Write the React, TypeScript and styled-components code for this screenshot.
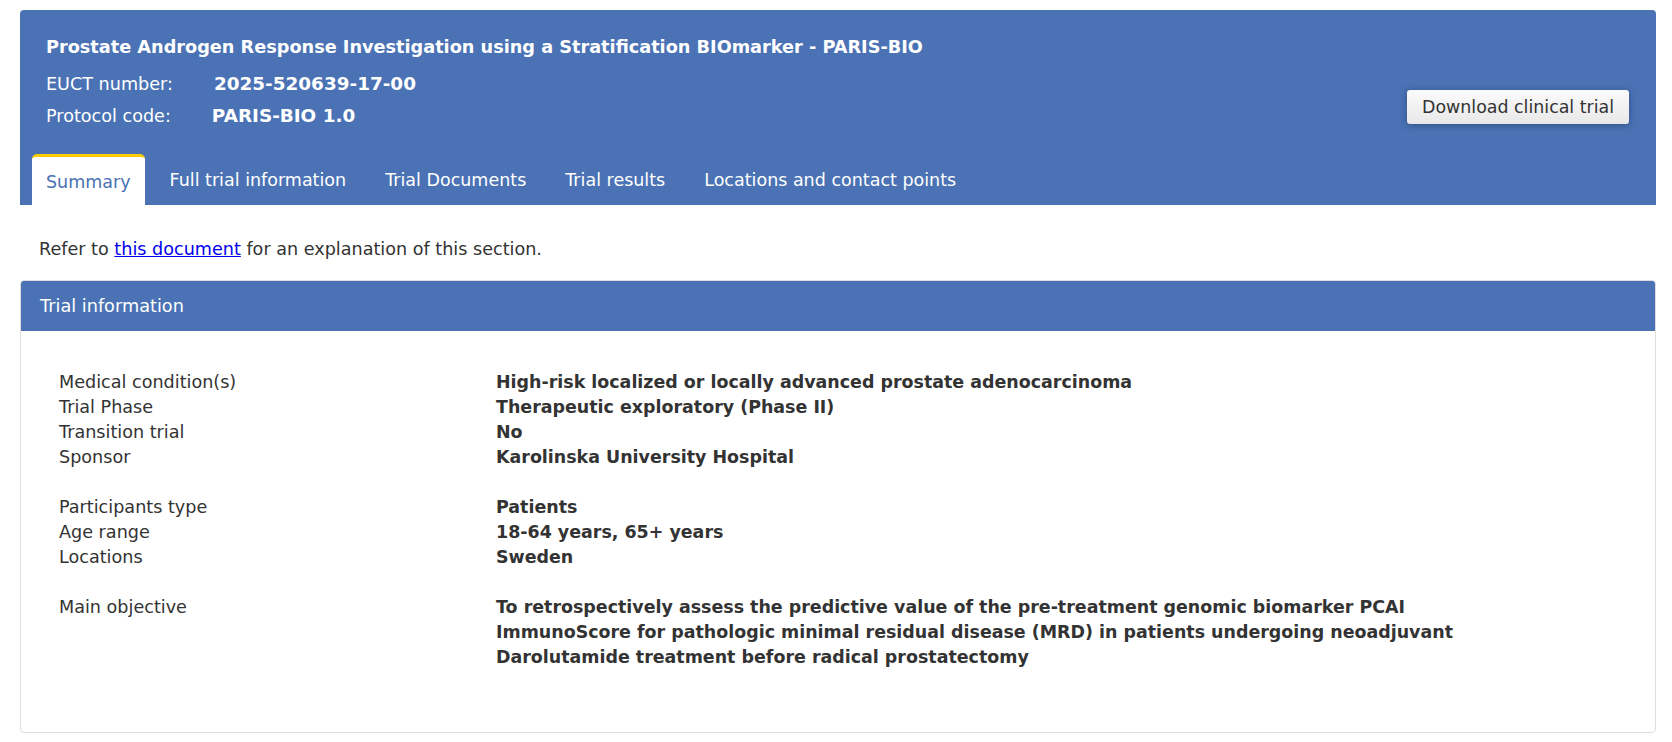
import * as React from "react";
import styled, { createGlobalStyle } from "styled-components";

const blue = "#4a72b4";

const GlobalStyle = createGlobalStyle`
  body {
    margin: 0;
    background: #fff;
    color: #333;
    font-family: "DejaVu Sans", Verdana, sans-serif;
    font-size: 17.6px;
  }
`;

const Page = styled.div`
  padding: 10px 16px 10px 20px;
`;

// Blue trial header with title, codes, button and tabs
const TrialHeader = styled.header`
  background: ${blue};
  color: #fff;
  border-radius: 4px 4px 0 0;
  padding: 25px 27px 0 12px;
`;

const TopRow = styled.div`
  display: flex;
  justify-content: space-between;
  align-items: flex-end;
  padding-left: 14px;
`;

const Title = styled.h1`
  margin: 0;
  font-size: 17.7px;
  font-weight: bold;
  line-height: 24px;
`;

const MetaRow = styled.div`
  line-height: 32px;
  &:first-of-type {
    margin-top: 9px;
  }
`;

const MetaLabel = styled.span`
  margin-right: 41px;
`;

const MetaValue = styled.span`
  font-weight: bold;
  font-size: 18.4px;
`;

const DownloadButton = styled.button`
  margin-bottom: 8px;
  height: 34px;
  padding: 0 15px;
  border: none;
  border-radius: 3px;
  font-family: inherit;
  font-size: 17.4px;
  color: #333;
  background: linear-gradient(#fbfbfb, #e8e8e8);
  box-shadow: 0 1px 7px rgba(20, 40, 80, 0.45);
  cursor: pointer;
`;

const TabBar = styled.nav`
  display: flex;
  gap: 11px;
  margin-top: 22px;
`;

const Tab = styled.a<{ $active?: boolean }>`
  box-sizing: border-box;
  height: 51px;
  padding: 15px 14px 0;
  line-height: 22px;
  font-size: 17.5px;
  color: #fff;
  text-decoration: none;
  cursor: pointer;
  ${(p) =>
    p.$active &&
    `
    background: #fff;
    color: ${blue};
    border-top: 3px solid #ffcc00;
    padding-top: 14px;
    border-radius: 5px 5px 0 0;
  `}
`;

const Intro = styled.p`
  margin: 33px 0 20px 19px;
  line-height: 22px;
  a {
    color: #0000ee;
  }
`;

// Trial information panel
const Panel = styled.section`
  border: 1px solid #ddd;
  border-radius: 4px;
  overflow: hidden;
`;

const PanelHeader = styled.h2`
  margin: 0;
  height: 50px;
  line-height: 50px;
  padding-left: 19px;
  background: ${blue};
  color: #fff;
  font-size: 17.7px;
  font-weight: normal;
`;

const PanelBody = styled.div`
  padding: 39px 0 62px 38px;
`;

const InfoGroup = styled.dl`
  display: grid;
  grid-template-columns: 437px 990px;
  margin: 0;
  line-height: 25px;
  & + & {
    margin-top: 25px;
  }
`;

const Label = styled.dt`
  color: #333;
`;

const Value = styled.dd`
  margin: 0;
  font-weight: bold;
  color: #333;
  font-size: 17.45px;
`;

const groups: [string, string][][] = [
  [
    ["Medical condition(s)", "High-risk localized or locally advanced prostate adenocarcinoma"],
    ["Trial Phase", "Therapeutic exploratory (Phase II)"],
    ["Transition trial", "No"],
    ["Sponsor", "Karolinska University Hospital"],
  ],
  [
    ["Participants type", "Patients"],
    ["Age range", "18-64 years, 65+ years"],
    ["Locations", "Sweden"],
  ],
  [
    [
      "Main objective",
      "To retrospectively assess the predictive value of the pre-treatment genomic biomarker PCAI ImmunoScore for pathologic minimal residual disease (MRD) in patients undergoing neoadjuvant Darolutamide treatment before radical prostatectomy",
    ],
  ],
];

const tabs = [
  "Summary",
  "Full trial information",
  "Trial Documents",
  "Trial results",
  "Locations and contact points",
];

export default function App() {
  const [active, setActive] = React.useState(0);

  return (
    <Page>
      <GlobalStyle />
      <TrialHeader>
        <TopRow>
          <div>
            <Title>
              Prostate Androgen Response Investigation using a Stratification BIOmarker - PARIS-BIO
            </Title>
            <MetaRow>
              <MetaLabel>EUCT number:</MetaLabel>
              <MetaValue>2025-520639-17-00</MetaValue>
            </MetaRow>
            <MetaRow>
              <MetaLabel>Protocol code:</MetaLabel>
              <MetaValue>PARIS-BIO 1.0</MetaValue>
            </MetaRow>
          </div>
          <DownloadButton>Download clinical trial</DownloadButton>
        </TopRow>
        <TabBar>
          {tabs.map((t, i) => (
            <Tab key={t} $active={i === active} onClick={() => setActive(i)}>
              {t}
            </Tab>
          ))}
        </TabBar>
      </TrialHeader>

      <Intro>
        Refer to <a href="#">this document</a> for an explanation of this section.
      </Intro>

      <Panel>
        <PanelHeader>Trial information</PanelHeader>
        <PanelBody>
          {groups.map((rows, gi) => (
            <InfoGroup key={gi}>
              {rows.map(([label, value]) => (
                <React.Fragment key={label}>
                  <Label>{label}</Label>
                  <Value>{value}</Value>
                </React.Fragment>
              ))}
            </InfoGroup>
          ))}
        </PanelBody>
      </Panel>
    </Page>
  );
}
